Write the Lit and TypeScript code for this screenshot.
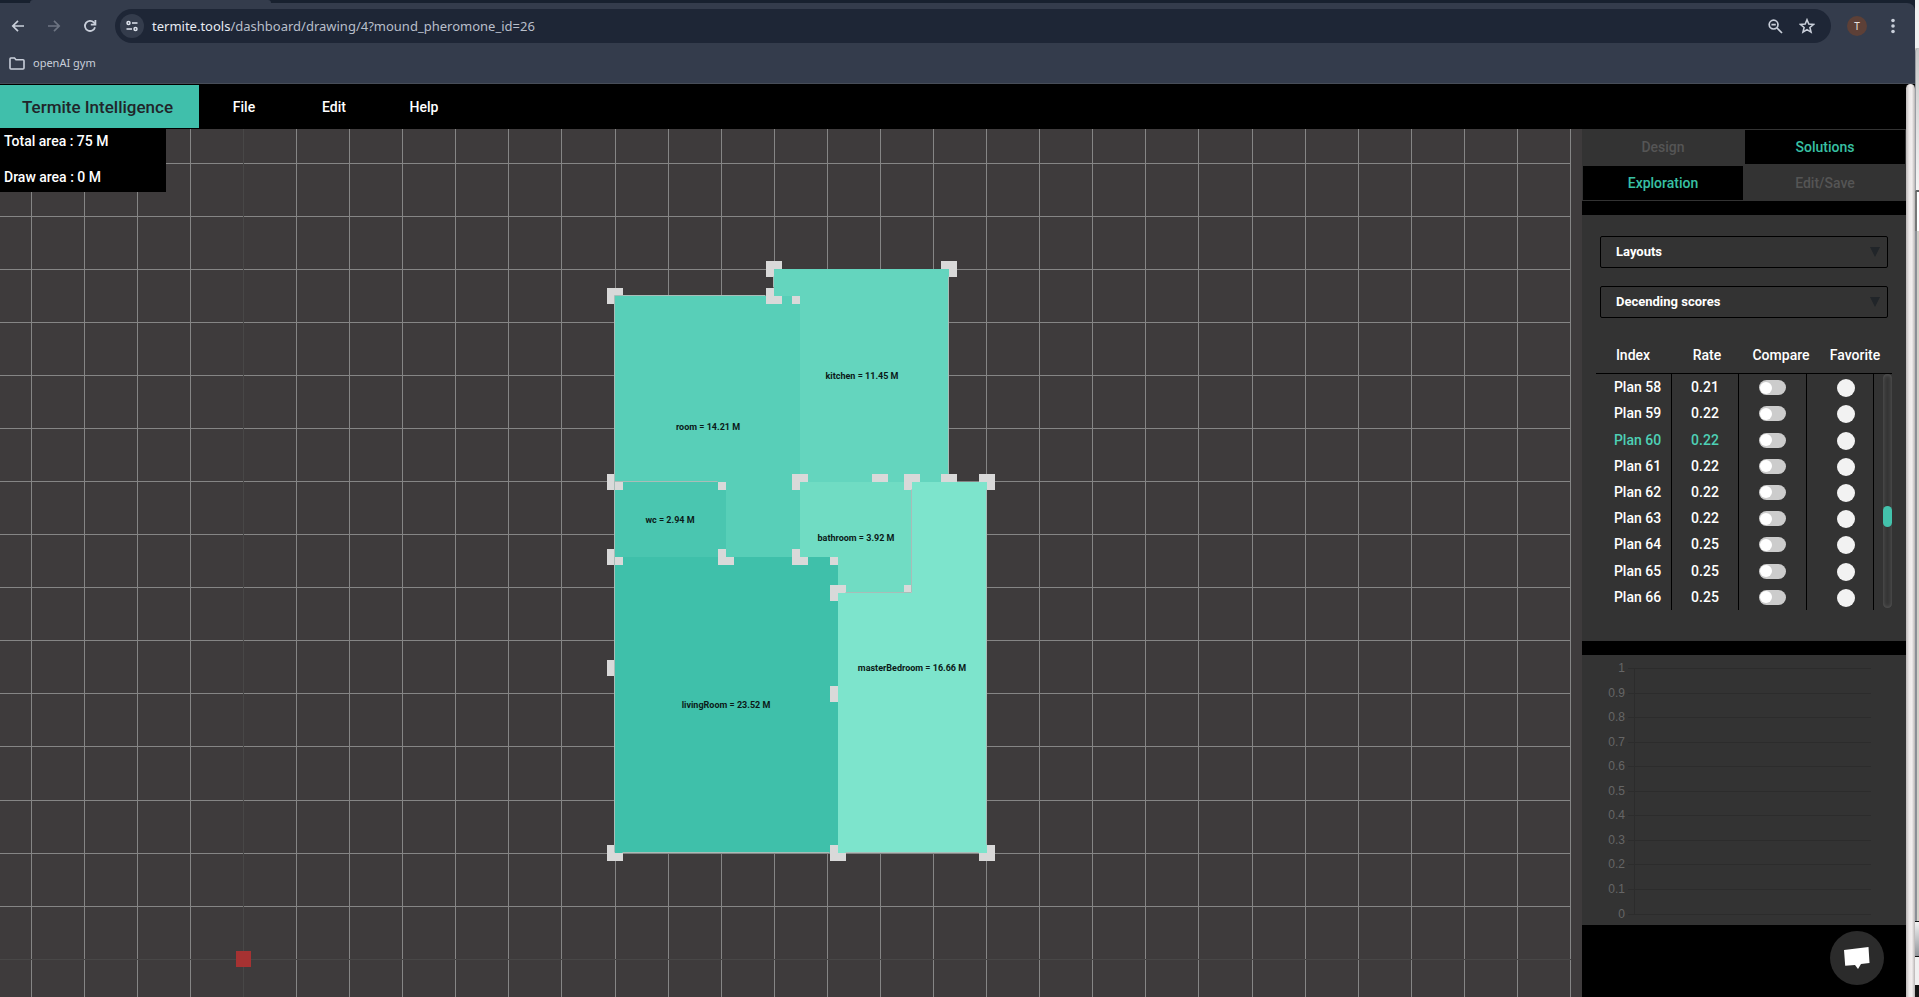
import { LitElement, html, svg, css } from "lit";
import { customElement } from "lit/decorators.js";
import { classMap } from "lit/directives/class-map.js";

type Point = [number, number];
interface Room { name: string; area: string; fill: string; label: Point; points: Point[]; handles?: Point[]; }

const ROOMS: Room[] = [
  { name: "livingRoom", area: "23.52", fill: "#3fc0aa", label: [726, 579],
    points: [[615, 428], [838, 428], [838, 724], [615, 724]], handles: [[615, 539]] },
  { name: "wc", area: "2.94", fill: "#4ac6b0", label: [670, 394],
    points: [[615, 353], [726, 353], [726, 428], [615, 428]] },
  { name: "room", area: "14.21", fill: "#58cfb8", label: [708, 301],
    points: [[615, 167], [800, 167], [800, 428], [726, 428], [726, 353], [615, 353]] },
  { name: "kitchen", area: "11.45", fill: "#64d5be", label: [862, 250],
    points: [[774, 140], [949, 140], [949, 353], [800, 353], [800, 167], [774, 167]] },
  { name: "bathroom", area: "3.92", fill: "#70dcc3", label: [856, 412],
    points: [[800, 353], [912, 353], [912, 464], [838, 464], [838, 428], [800, 428]], handles: [[880, 353]] },
  { name: "masterBedroom", area: "16.66", fill: "#7de4cc", label: [912, 542],
    points: [[912, 353], [987, 353], [987, 724], [838, 724], [838, 464], [912, 464]], handles: [[949, 353], [838, 565]] },
];

@customElement("browser-bar")
class BrowserBar extends LitElement {
  static styles = css`
    :host { display: block; background: #18212f; color: #c9cfda; font-family: "Noto Sans", "Open Sans", sans-serif; border-bottom: 1px solid #474d58; }
    .strip { height: 3px; }
    .strip-tab { display: block; width: 241px; height: 3px; margin-left: 30px; background: #343c4c; border-radius: 3px 3px 0 0; }
    .row { display: flex; align-items: center; box-sizing: border-box; height: 40px; padding: 6px 15px 0 0; background: #343c4c; border-radius: 0 8px 0 0; }
    button { display: grid; place-items: center; border: 0; background: none; padding: 0; color: inherit; font: inherit; }
    .nav { width: 36px; height: 34px; }
    .nav:disabled { color: #6d7482; }
    .address { flex: 1; display: flex; align-items: center; box-sizing: border-box; height: 34px; border-radius: 17px; background: #1e2636; padding: 0 8px 0 5px; margin: 0 16px 0 7px; }
    .site { width: 24px; height: 24px; border-radius: 50%; background: #343c4c; color: #dfe4ee; }
    .url { flex: 1; padding-left: 8px; font-size: 13px; line-height: 20px; color: #b9bfca; }
    .host { color: #e8ebf2; }
    .tool { width: 32px; height: 24px; }
    .avatar { width: 20px; height: 20px; border-radius: 50%; background: #5d4037; color: #e8e0de; font-size: 10px; line-height: 20px; margin-right: 19px; }
    .bookmarks { display: flex; height: 40px; padding: 0 9px; background: #343c4c; }
    .bookmark { display: flex; align-items: center; height: 40px; gap: 8px; color: #c9cfda; font-size: 11px; line-height: 16px; text-decoration: none; }
  `;
  render() {
    return html`
      <div class="strip"><span class="strip-tab"></span></div>
      <div class="row">
        <button class="nav" aria-label="Back"><svg width="14" height="14" viewBox="0 0 14 14" fill="none" stroke="currentColor" stroke-width="1.7"><path d="M13 7H2M7 1.800 1.800 7 7 12.200"/></svg></button>
        <button class="nav" aria-label="Forward" disabled><svg width="14" height="14" viewBox="0 0 14 14" fill="none" stroke="currentColor" stroke-width="1.7"><path d="M1 7H12M7 1.800 12.200 7 7 12.200"/></svg></button>
        <button class="nav" aria-label="Reload"><svg width="14" height="14" viewBox="0 0 14 14" fill="none" stroke="currentColor" stroke-width="1.8"><path d="M12 8.200A5.100 5.100 0 1 1 10.800 3.400L12 4.800"/><path d="M12.400 1v4.600H7.800"/></svg></button>
        <div class="address">
          <button class="site" aria-label="Site information"><svg width="12" height="12" viewBox="0 0 12 12" fill="none" stroke="currentColor" stroke-width="1.5"><circle cx="2.5" cy="3" r="1.5"/><path d="M6 3h5.500M.5 9H6"/><circle cx="9.5" cy="9" r="1.5"/></svg></button>
          <span class="url"><span class="host">termite.tools</span>/dashboard/drawing/4?mound_pheromone_id=26</span>
          <button class="tool" aria-label="Zoom"><svg width="15" height="15" viewBox="0 0 15 15" fill="none" stroke="currentColor" stroke-width="1.7"><circle cx="5.6" cy="5.6" r="4.4"/><path d="M9 9l5 5M3.400 5.600h4.400"/></svg></button>
          <button class="tool" aria-label="Bookmark this page"><svg width="16" height="16" viewBox="0 0 16 16" fill="none" stroke="currentColor" stroke-width="1.6"><path d="M8 1.800l1.800 4.300 4.600.4-3.500 3 1.100 4.600L8 11.600l-4 2.500 1.100-4.600-3.500-3 4.600-.4z"/></svg></button>
        </div>
        <button class="avatar" aria-label="Profile">T</button>
        <button aria-label="Menu"><svg width="14" height="16" viewBox="0 0 14 16" fill="currentColor"><circle cx="7" cy="2.5" r="1.8"/><circle cx="7" cy="8" r="1.8"/><circle cx="7" cy="13.5" r="1.8"/></svg></button>
      </div>
      <div class="bookmarks">
        <a class="bookmark" href="#"><svg width="16" height="13" viewBox="0 0 16 13" fill="none" stroke="currentColor" stroke-width="1.6"><path d="M1 1.900Q1 1 1.900 1H5.500L7 2.800h7q1 0 1 .9v7.300q0 1-1 1H2q-1 0-1-1z"/></svg>openAI gym</a>
      </div>`;
  }
}

@customElement("menu-bar")
class MenuBar extends LitElement {
  static styles = css`
    :host { display: flex; align-items: center; height: 45px; background: #000; font-family: Roboto, sans-serif; }
    .brand { display: grid; place-items: center; width: 199px; height: 43px; padding-right: 4px; box-sizing: border-box; background: #40bfab; color: #212529; font-size: 17px; font-weight: 500; line-height: 20px; }
    .menu { display: flex; }
    .item { width: 90px; border: 0; padding: 0; background: none; color: #fff; font: 500 14px/20px Roboto, sans-serif; text-align: center; }
  `;
  render() {
    return html`<div class="brand">Termite Intelligence</div>
      <nav class="menu">${["File", "Edit", "Help"].map((t) => html`<button class="item">${t}</button>`)}</nav>`;
  }
}

@customElement("plan-canvas")
class PlanCanvas extends LitElement {
  static styles = css`
    :host { display: block; position: relative; overflow: hidden; background: #3e3b3c; font-family: Roboto, sans-serif; }
    .board { display: block; width: 100%; height: 100%; }
    .grid { stroke: #858585; stroke-width: 1; }
    .axis { stroke: #484747; stroke-width: 1; }
    .handle { fill: #d9d9d9; }
    .edge { stroke: #a9bdb8; stroke-width: 1; }
    .label { font-size: 9px; font-weight: 700; text-anchor: middle; fill: #0b1a18; }
    .origin { fill: #a63232; }
    .areas { position: absolute; top: 0; left: 0; width: 166px; height: 63px; padding: 0 4px; box-sizing: border-box; background: #000; color: #fff; font-size: 14px; font-weight: 500; line-height: 24px; display: flex; flex-direction: column; gap: 12px; }
  `;
  private gridLines() {
    const step = 53.08, right = 1571, lines = [];
    for (let i = -4; i <= 25; i++) {
      const x = Math.floor(243.5 + i * step) + 0.5;
      if (i) lines.push(svg`<line class="grid" x1=${x} x2=${x} y1="0" y2="100%"/>`);
    }
    for (let i = 1; i <= 15; i++) {
      const y = Math.floor(830.3 - i * step) + 0.5;
      lines.push(svg`<line class="grid" x1="0" x2=${right} y1=${y} y2=${y}/>`);
    }
    return lines;
  }
  private room(r: Room) {
    const dots = [...r.points, ...(r.handles ?? [])];
    return svg`
      ${dots.map(([x, y]) => svg`<rect class="handle" x=${x - 8} y=${y - 8} width="16" height="16"/>`)}
      <polygon fill=${r.fill} points=${r.points.map((p) => p.join(",")).join(" ")}/>`;
  }
  render() {
    const edges = [[615, 167, 615, 724], [615, 167, 766, 167], [615, 353, 718, 353], [912, 361, 912, 464],
      [846, 464, 912, 464], [774, 148, 774, 159], [949, 148, 949, 345], [987, 361, 987, 716], [623, 724, 830, 724], [846, 724, 979, 724]];
    return html`
      <svg class="board" role="img" aria-label="Floor plan">
        ${this.gridLines()}
        <line class="axis" x1="243.5" x2="243.5" y1="0" y2="100%"/>
        <line class="axis" x1="0" x2="1571" y1="830.5" y2="830.5"/>
        <rect class="origin" x="236" y="822" width="15" height="16"/>
        ${ROOMS.map((r) => this.room(r))}
        ${edges.map(([a, b, c, d]) => svg`<line class="edge" x1=${a} y1=${b} x2=${c} y2=${d} transform="translate(-.5 -.5)"/>`)}
        ${ROOMS.map((r) => svg`<text class="label" x=${r.label[0]} y=${r.label[1]}>${r.name} = ${r.area} M</text>`)}
      </svg>
      <div class="areas"><span>Total area : 75 M</span><span>Draw area : 0 M</span></div>`;
  }
}

@customElement("plan-table")
class PlanTable extends LitElement {
  static properties = { selected: { type: Number } };
  declare selected: number;
  constructor() { super(); this.selected = 60; }
  static styles = css`
    :host { display: block; margin: 0 14px; font: 500 14px/26px Roboto, sans-serif; color: #fff; }
    .wrap { position: relative; }
    .plans { display: block; }
    .head, .body { display: block; }
    .head { border-bottom: 1px solid #000; }
    .head-row { display: grid; grid-template-columns: repeat(4, 1fr); height: 55px; align-items: center; padding-top: 18px; box-sizing: border-box; }
    .head-row th { padding: 0; font-weight: 500; text-align: center; }
    .body { display: grid; grid-auto-rows: 1fr; height: 236px; margin-right: 18px; }
    .plan { display: grid; grid-template-columns: 76px 67px 68px 67px; }
    .plan td { display: flex; align-items: center; justify-content: center; padding: 0; border-right: 1px solid #000; }
    .plan .name { padding-left: 8px; }
    .plan .fav { padding: 2px 0 0 12px; }
    .plan .cmp { padding-top: 1px; }
    .active { color: #4ed0b5; }
    .toggle, .star { appearance: none; margin: 0; }
    .toggle { display: flex; align-items: center; width: 27px; height: 15px; border-radius: 8px; background: #ccc; padding-left: 1px; box-sizing: border-box; }
    .toggle::before { content: ""; width: 12px; height: 12px; border-radius: 50%; background: #fff; }
    .toggle:checked { background: #40bfab; justify-content: flex-end; }
    .star { width: 18px; height: 18px; border-radius: 50%; background: #f2f2f2; }
    .star:checked { background: #40bfab; }
    .track { position: absolute; right: 0; bottom: 2px; width: 9px; height: 234px; border-radius: 5px; background: #353535; box-shadow: inset 0 0 4px #606060; }
    .thumb { position: absolute; top: 132px; width: 9px; height: 21px; border-radius: 5px; background: #43c2ac; }
  `;
  render() {
    const rates = ["0.21", "0.22", "0.22", "0.22", "0.22", "0.22", "0.25", "0.25", "0.25"];
    return html`<div class="wrap">
      <table class="plans">
        <thead class="head"><tr class="head-row"><th>Index</th><th>Rate</th><th>Compare</th><th>Favorite</th></tr></thead>
        <tbody class="body">${rates.map((rate, i) => {
          const id = 58 + i;
          return html`<tr class=${classMap({ plan: true, active: id === this.selected })} @click=${() => (this.selected = id)}>
            <td class="name">Plan ${id}</td><td>${rate}</td>
            <td class="cmp"><input class="toggle" type="checkbox" role="switch" aria-label="Compare plan ${id}"></td>
            <td class="fav"><input class="star" type="checkbox" aria-label="Favorite plan ${id}"></td></tr>`;
        })}</tbody>
      </table>
      <div class="track"><div class="thumb"></div></div>
    </div>`;
  }
}

@customElement("side-panel")
class SidePanel extends LitElement {
  static styles = css`
    :host { display: flex; flex-direction: column; background: #000; font-family: Roboto, sans-serif; }
    .tabs { display: grid; grid-template-columns: 1fr 1fr; flex-shrink: 0; background: #333; }
    .tab { height: 36px; border: 1px solid #333; background: #333; color: #555; font: 500 14px/20px Roboto, sans-serif; padding: 0; }
    .tab.on { background: #000; color: #38c0a4; }
    .panel { flex-shrink: 0; margin-top: 14px; padding: 21px 0 31px; background: #333; }
    .pick { position: relative; display: block; margin: 0 18px 18px; color: #212529; }
    .pick::after { content: ""; position: absolute; right: 8px; top: 11px; border: 5px solid transparent; border-top: 10px solid #212529; border-bottom: 0; }
    select { appearance: none; display: block; width: 100%; height: 32px; padding: 0 15px; border: 1px solid #000; border-radius: 2px; background: #333; color: #fff; font: 700 13px/20px Roboto, sans-serif; }
    .pick:last-of-type { margin-bottom: 0; }
    .chart { flex-shrink: 0; margin-top: 14px; height: 270px; background: #333; }
    .chart svg { display: block; width: 100%; height: 100%; }
    .rule { stroke: #2c2c2c; }
    .tick { font: 12px "Liberation Sans", sans-serif; fill: #666; text-anchor: end; }
    .foot { flex: 1; display: flex; justify-content: flex-end; align-items: flex-start; padding: 6px 22px; }
    .chat { display: grid; place-items: center; width: 54px; height: 54px; padding: 0; border: 0; border-radius: 50%; background: #2b2b2b; }
  `;
  render() {
    const ticks = ["1", "0.9", "0.8", "0.7", "0.6", "0.5", "0.4", "0.3", "0.2", "0.1", "0"];
    return html`
      <div class="tabs"><button class="tab">Design</button><button class="tab on">Solutions</button><button class="tab on">Exploration</button><button class="tab">Edit/Save</button></div>
      <section class="panel">
        <label class="pick"><select aria-label="Layouts"><option>Layouts</option></select></label>
        <label class="pick"><select aria-label="Sort order"><option>Decending scores</option></select></label>
        <plan-table></plan-table>
      </section>
      <section class="chart"><svg role="img" aria-label="Score chart">
        ${ticks.map((t, i) => { const y = Math.round(13 + i * 24.55); return svg`<line class="rule" x1="46" x2="289" y1=${y + 0.5} y2=${y + 0.5}/><text class="tick" x="43" y=${y + 4}>${t}</text>`; })}
        <line class="rule" x1="52.5" x2="52.5" y1="13" y2="259"/>
      </svg></section>
      <div class="foot"><button class="chat" aria-label="Open chat"><svg width="26" height="22" viewBox="0 0 26 22"><path fill="#fff" d="M0 3 24.500 0 25.500 16 17 17 14 22 11 18 1.200 18.700z"/></svg></button></div>`;
  }
}

@customElement("app-root")
class AppRoot extends LitElement {
  static styles = css`
    :host { display: grid; grid-template-columns: minmax(0, 1fr) 4px; height: 100vh; overflow: hidden; background: #000; }
    .window { display: flex; flex-direction: column; min-width: 0; min-height: 0; }
    .page { flex: 1; display: grid; grid-template-columns: minmax(0, 1fr) 9px; min-height: 0; }
    .app { display: flex; flex-direction: column; min-height: 0; }
    .work { flex: 1; display: grid; grid-template-columns: minmax(0, 1fr) 324px; grid-template-rows: minmax(0, 1fr); min-height: 0; }
    .scroll { border-radius: 5px 5px 0 0; background: linear-gradient(90deg, #bdb9b9, #ece8e8 35%, #f2eeee 65%, #b9b5b5); }
    .desktop { display: flex; flex-direction: column; background: #d4d0c8; }
    .d1 { height: 48px; background: #f0f0f0; }
    .d2 { height: 144px; background: linear-gradient(#c9c9c9, #f4f4f4); border-left: 1px solid #9a9ea4; border-bottom: 2px solid #666; border-top-left-radius: 4px; box-sizing: border-box; }
    .d3 { height: 39px; background: #fff; border-left: 2px solid #777; }
    .d4 { flex: 1; border-left: 2px solid #8b8f96; }
    .d5 { height: 36px; background: linear-gradient(#f2f2f2, #8f9499); border: solid #111; border-width: 1px 0; box-sizing: border-box; }
    .d6 { height: 28px; background: #f0f0f0; }
    .d7 { height: 12px; background: #151515; }
  `;
  render() {
    return html`
      <div class="window">
        <browser-bar></browser-bar>
        <div class="page">
          <div class="app"><menu-bar></menu-bar><div class="work"><plan-canvas></plan-canvas><side-panel></side-panel></div></div>
          <div class="scroll"></div>
        </div>
      </div>
      <div class="desktop"><i class="d1"></i><i class="d2"></i><i class="d3"></i><i class="d4"></i><i class="d5"></i><i class="d6"></i><i class="d7"></i></div>`;
  }
}
